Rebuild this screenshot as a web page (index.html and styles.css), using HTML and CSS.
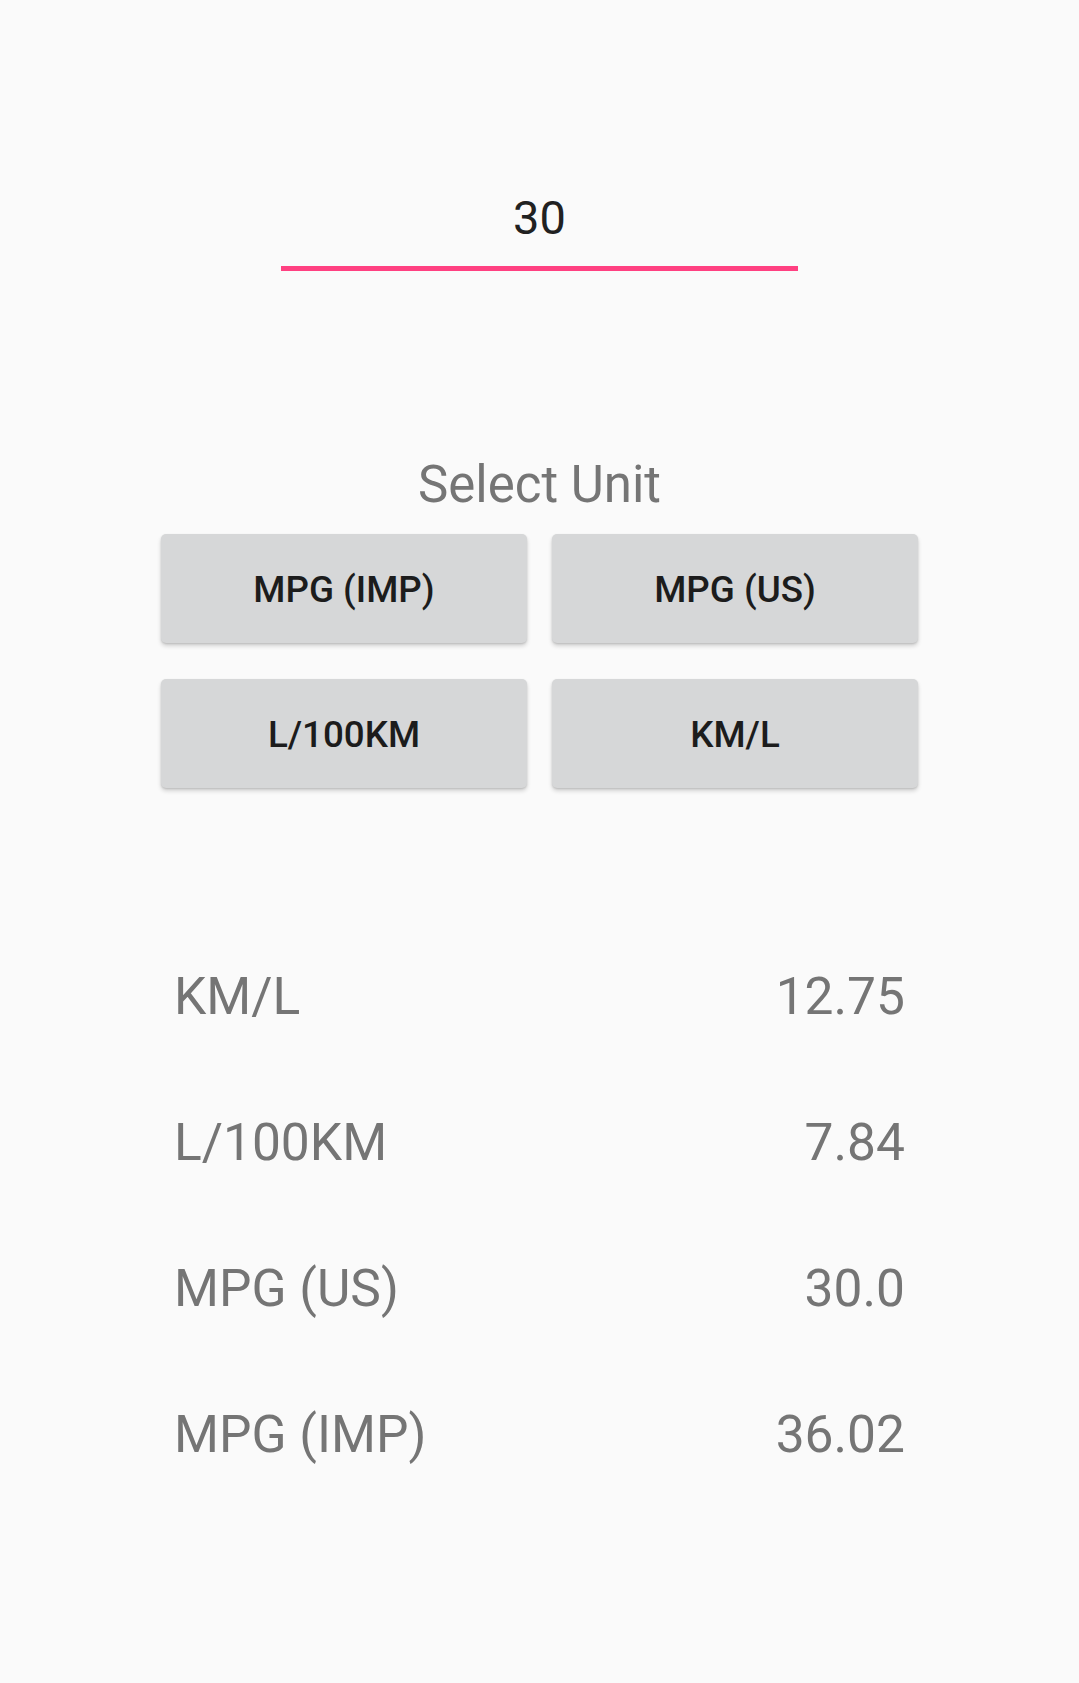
FILE: index.html
```html
<!DOCTYPE html>
<html lang="en">
<head>
    <meta charset="UTF-8">
    <meta name="viewport" content="width=device-width, initial-scale=1.0">
    <title>Fuel Economy Converter</title>
    <link rel="stylesheet" href="styles.css">
</head>
<body>
    <div class="app">
        <div class="input-field">
            <div class="input-value">30</div>
        </div>

        <h2 class="select-label">Select Unit</h2>

        <div class="unit-buttons">
            <button class="unit-button">MPG (IMP)</button>
            <button class="unit-button">MPG (US)</button>
            <button class="unit-button">L/100KM</button>
            <button class="unit-button">KM/L</button>
        </div>

        <div class="results">
            <div class="result-row">
                <span class="result-unit">KM/L</span>
                <span class="result-value">12.75</span>
            </div>
            <div class="result-row">
                <span class="result-unit">L/100KM</span>
                <span class="result-value">7.84</span>
            </div>
            <div class="result-row">
                <span class="result-unit">MPG (US)</span>
                <span class="result-value">30.0</span>
            </div>
            <div class="result-row">
                <span class="result-unit">MPG (IMP)</span>
                <span class="result-value">36.02</span>
            </div>
        </div>
    </div>
</body>
</html>
```

FILE: styles.css
```css
/* Reset and base styles */
* {
    margin: 0;
    padding: 0;
    box-sizing: border-box;
}

html, body {
    height: 100%;
}

body {
    font-family: Roboto, "Noto Sans", Arial, sans-serif;
    background: #fafafa;
    color: #212121;
}

.app {
    padding-top: 190px;
}

/* Number input */
.input-field {
    width: 517px;
    margin: 0 auto;
    padding-bottom: 20px;
    border-bottom: 5px solid #ff4081;
}

.input-value {
    font-size: 47px;
    line-height: 56px;
    text-align: center;
    color: #212121;
}

/* Unit picker */
.select-label {
    margin-top: 184px;
    font-size: 51px;
    font-weight: 400;
    line-height: 60px;
    text-align: center;
    color: #757575;
}

.unit-buttons {
    display: grid;
    grid-template-columns: 366px 366px;
    grid-auto-rows: 109px;
    column-gap: 25px;
    row-gap: 36px;
    justify-content: center;
    margin-top: 19px;
}

.unit-button {
    border: none;
    border-radius: 5px;
    background: #d6d7d8;
    color: #1c1c1c;
    font-family: Roboto, "Noto Sans", Arial, sans-serif;
    font-size: 36.75px;
    font-weight: 500;
    padding-top: 2px;
    box-shadow: 0 3px 4px rgba(0, 0, 0, 0.16), 0 1px 2px rgba(0, 0, 0, 0.12);
}

/* Converted values */
.results {
    display: flex;
    flex-direction: column;
    gap: 86px;
    margin-top: 179px;
    padding: 0 174px;
}

.result-row {
    display: flex;
    justify-content: space-between;
    font-size: 51.5px;
    line-height: 60px;
    color: #757575;
}
```
